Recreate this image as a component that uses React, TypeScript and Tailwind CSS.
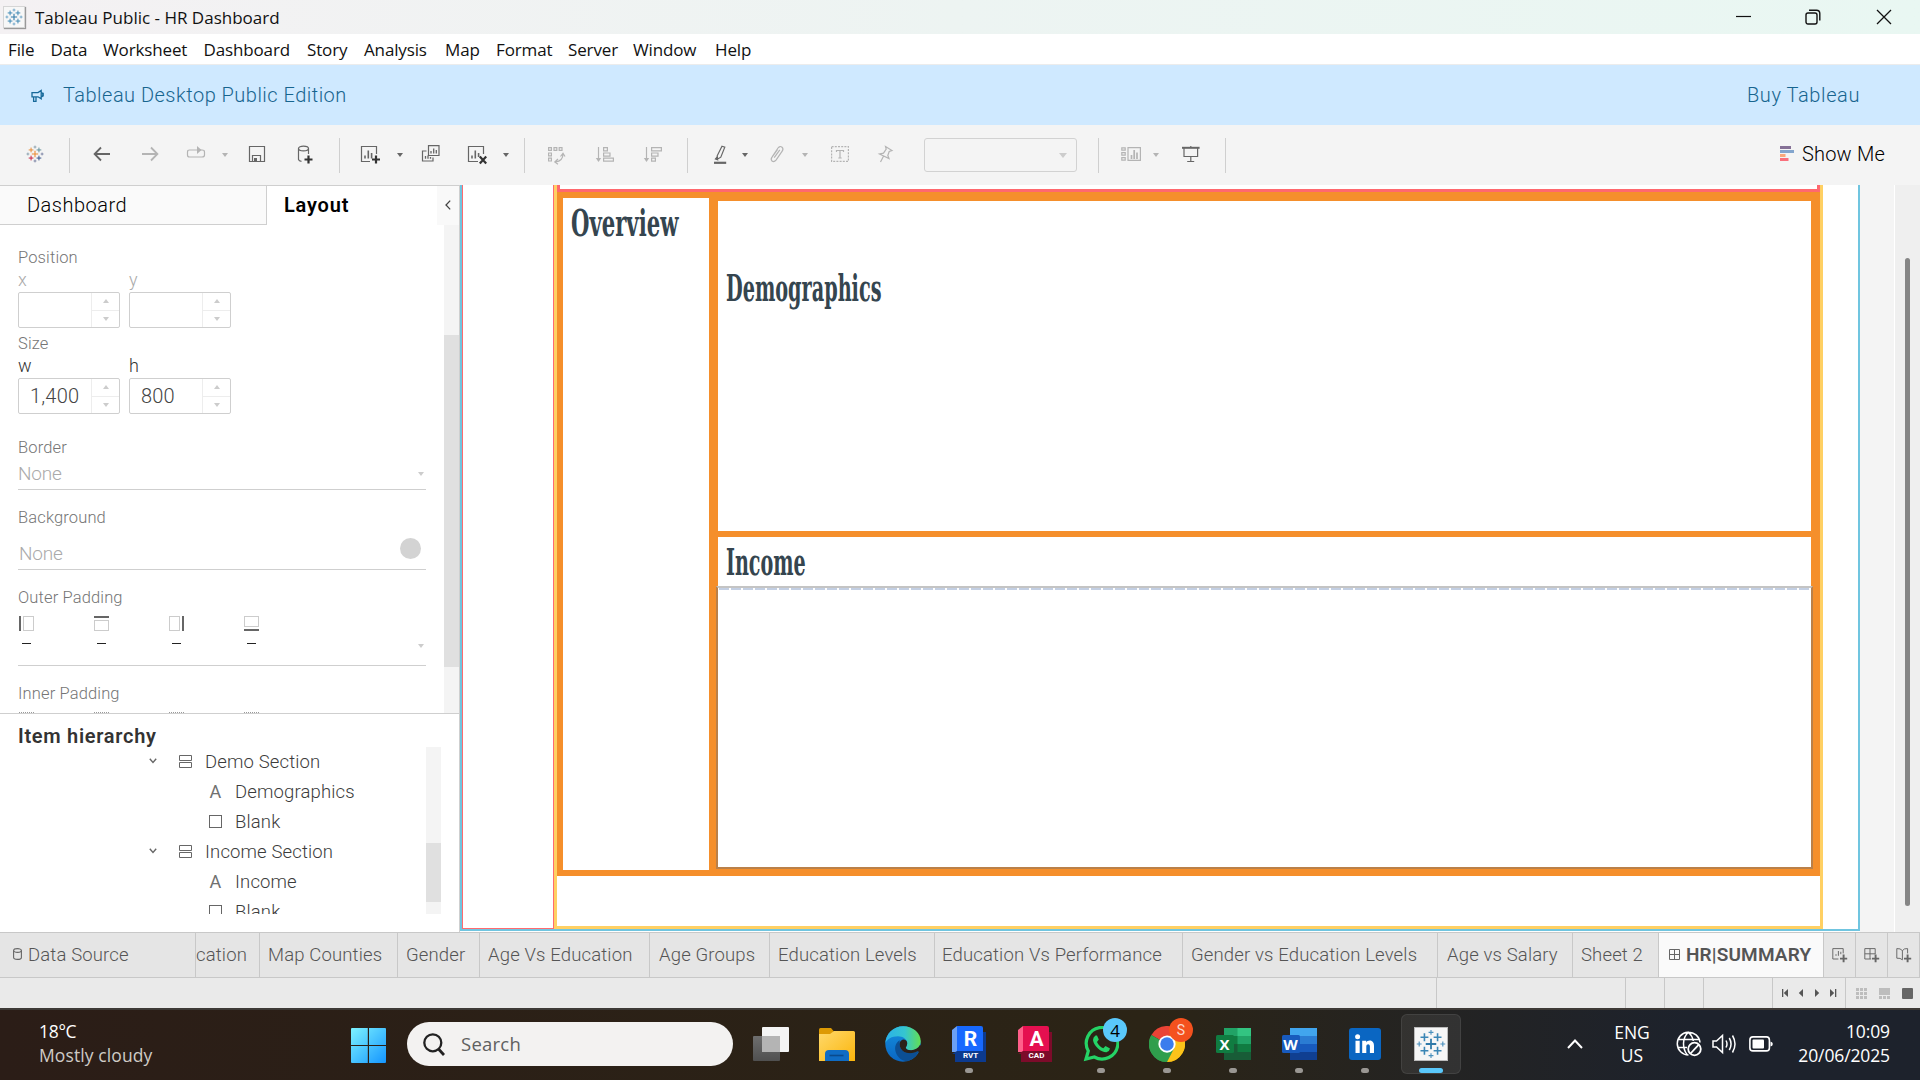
import React from "react";

/* ---------- shared glyphs ---------- */

type Plus = { x: number; y: number; r: number; c: string; w: number };

const tableauPluses = (colors: string[]): Plus[] => [
  { x: 16, y: 16, r: 5.6, c: colors[0], w: 1.9 },
  { x: 9, y: 8.8, r: 4.2, c: colors[1], w: 1.7 },
  { x: 23, y: 8.8, r: 4.2, c: colors[2], w: 1.7 },
  { x: 9, y: 23.2, r: 4.2, c: colors[3], w: 1.7 },
  { x: 23, y: 23.2, r: 4.2, c: colors[4], w: 1.7 },
  { x: 16, y: 3.6, r: 2.6, c: colors[5], w: 1.2 },
  { x: 16, y: 28.4, r: 2.6, c: colors[6], w: 1.2 },
  { x: 3.4, y: 16, r: 2.6, c: colors[5], w: 1.2 },
  { x: 28.6, y: 16, r: 2.6, c: colors[6], w: 1.2 },
];

const BLUES = ["#2f79a8", "#3b86b5", "#3b86b5", "#3b86b5", "#3b86b5", "#4a90bd", "#4a90bd"];
const BRAND = ["#eb8a2f", "#e58a35", "#5f8f98", "#c5203e", "#2f4f86", "#6f8a9c", "#5b6591"];

function TableauMark({ className, colors = BLUES }: { className?: string; colors?: string[] }) {
  return (
    <svg viewBox="0 0 32 32" className={className} fill="none">
      {tableauPluses(colors).map((p, i) => (
        <path
          key={i}
          d={`M${p.x - p.r} ${p.y}H${p.x + p.r}M${p.x} ${p.y - p.r}V${p.y + p.r}`}
          stroke={p.c}
          strokeWidth={p.w}
        />
      ))}
    </svg>
  );
}

function Caret({ className = "text-[#666]" }: { className?: string }) {
  return (
    <svg viewBox="0 0 6 4" className={`h-1 w-1.5 shrink-0 ${className}`} fill="currentColor">
      <path d="M0 0H6L3 4Z" />
    </svg>
  );
}

function Tool({ className = "h-5 w-5", children }: { className?: string; children: React.ReactNode }) {
  return (
    <svg viewBox="0 0 20 20" className={`shrink-0 ${className}`} fill="none" stroke="currentColor" strokeWidth="1.2">
      {children}
    </svg>
  );
}

function Sep({ className = "" }: { className?: string }) {
  return <div className={`h-[35px] w-px shrink-0 bg-[#cfcfcf] ${className}`} />;
}

/* ---------- window chrome ---------- */

function TitleBar() {
  return (
    <div className="flex h-[34px] items-center bg-linear-to-r from-[#f4f1f3] via-[#edf4f2] to-[#e9f7f2] pl-[3px]">
      <div className="flex h-[22px] w-[22px] items-center justify-center border border-[#d5d5d5] bg-[#f7f7f7] shadow-[1px_1px_1px_#999]">
        <TableauMark className="h-[18px] w-[18px]" />
      </div>
      <span className="ml-[10px] font-['Open_Sans','Noto_Sans',sans-serif] text-[17px] leading-none font-normal text-[#111]">
        Tableau Public - HR Dashboard
      </span>
      <svg viewBox="0 0 15 16" className="ml-auto h-4 w-[15px]" stroke="#111" fill="none">
        <path d="M0 7.5H15" strokeWidth="1.2" />
      </svg>
      <svg viewBox="0 0 16 16" className="ml-[54px] h-4 w-4" stroke="#111" fill="none" strokeWidth="1.4">
        <rect x="1" y="4" width="11" height="11" rx="2" />
        <path d="M4 1.3H11.5A3.3 3.3 0 0 1 14.8 4.6V11.6" />
      </svg>
      <svg viewBox="0 0 16 16" className="mr-[28px] ml-[55px] h-4 w-4" stroke="#111" fill="none" strokeWidth="1.3">
        <path d="M1 1L15 15M15 1L1 15" />
      </svg>
    </div>
  );
}

const MENUS = ["File", "Data", "Worksheet", "Dashboard", "Story", "Analysis", "Map", "Format", "Server", "Window", "Help"];

function MenuBar() {
  return (
    <div className="grid h-[31px] grid-cols-[42.5px_52.5px_100.5px_103.5px_57px_81px_51px_72px_65px_82px_60px] items-center border-b border-[#ececec] bg-white pt-px pl-2 font-['Open_Sans','Noto_Sans',sans-serif] text-[17px] leading-none font-normal tracking-[-0.14px] text-[#111]">
      {MENUS.map((m) => (
        <span key={m}>{m}</span>
      ))}
    </div>
  );
}

function Banner() {
  return (
    <div className="flex h-[60px] items-center bg-[#cfe9ff] pr-[60px] pl-[31px] text-[20px] leading-none text-[#17658f]">
      <svg viewBox="0 0 14 14" className="mt-[2px] h-[14px] w-[14px]" fill="none" stroke="#17699a" strokeWidth="1.3">
        <path d="M1 3.6H7L10.2 1.4V9.8L7 7.8H1ZM2.6 7.8V12.4H5V7.8M12.2 3.8V7.4M10.2 3.6C12.4 3.6 12.4 7.8 10.2 7.8" />
      </svg>
      <span className="ml-[18px] tracking-[0.48px]">Tableau Desktop Public Edition</span>
      <span className="ml-auto tracking-[0.6px]">Buy Tableau</span>
    </div>
  );
}

function Toolbar() {
  const on = "h-5 w-5 text-[#666]";
  const off = "h-5 w-5 text-[#b4b4b4]";
  return (
    <div className="flex h-[60px] items-center bg-[#f4f4f4] pl-[25px]">
      <TableauMark className="-mt-[2px] h-[18px] w-5" colors={BRAND} />
      <Sep className="ml-6" />
      <Tool className={`ml-[22px] ${on}`}>
        <path d="M18 9H3M9 2.5L2.6 9L9 15.5" strokeWidth="1.8" />
      </Tool>
      <Tool className={`ml-7 ${off}`}>
        <path d="M2 9H17M11 2.5L17.4 9L11 15.5" strokeWidth="1.8" />
      </Tool>
      <Tool className={`ml-[26px] ${off}`}>
        <path d="M7 5H3.5Q1.5 5 1.5 7V10Q1.5 12 3.5 12H16Q18.5 12 18.5 10V7Q18.5 5 16 5H3.5" />
        <path d="M11 1L15.5 5L11 9Z" fill="currentColor" stroke="none" />
      </Tool>
      <Caret className="ml-4 text-[#b4b4b4]" />
      <Tool className={`ml-[19px] ${on}`}>
        <path d="M2.5 1.5H17.5V16.5H2.5ZM5.5 16.5V10.5H13.5V16.5" />
        <path d="M7 13H10V16.5H7Z" fill="currentColor" stroke="none" />
      </Tool>
      <Tool className={`ml-7 ${on}`}>
        <ellipse cx="8.5" cy="3.5" rx="5" ry="2.4" />
        <path d="M3.5 3.5V14.5Q4 16 6.5 16.3M13.5 3.5V9" />
        <path d="M13.5 10.5V18.5M9.5 14.5H17.5" stroke="#333" strokeWidth="2.2" />
      </Tool>
      <Sep className="ml-6" />
      <Tool className={`ml-5 ${on}`}>
        <path d="M16.5 9V1.5H1.5V16.5H10" />
        <path d="M5 13.5V10.5M8.3 13.5V5.5M11.6 13.5V8" strokeWidth="1.6" />
        <path d="M16 10.5V18.5M12 14.5H20" stroke="#333" strokeWidth="2.2" />
      </Tool>
      <Caret className="ml-[17px] text-[#666]" />
      <Tool className={`ml-[18px] ${on}`}>
        <path d="M7.5 .7H18V10.5H7.5ZM5.5 6H1.5V16H12V12.5" />
        <path d="M10 8.5V6M12.7 8.5V3.5M15.3 8.5V5M4.5 13.8V11M7 13.8V10.5M9.5 13.8V12" strokeWidth="1.3" />
      </Tool>
      <Tool className={`ml-[26px] ${on}`}>
        <path d="M16.5 9V1.5H1.5V16.5H11" />
        <path d="M5 13.5V10.5M8.3 13.5V5.5M11.6 12V8" strokeWidth="1.6" />
        <path d="M12.8 11.5L19.2 18.5M19.2 11.5L12.8 18.5" stroke="#333" strokeWidth="2.2" />
      </Tool>
      <Caret className="ml-4 text-[#666]" />
      <Sep className="ml-[15px]" />
      <Tool className={`ml-[21px] ${off}`}>
        <path d="M2.6 2.6H5.4V5.4H2.6ZM8 2.6H10.8V5.4H8ZM13.2 2.6H16V5.4H13.2ZM2.6 8H5.4V10.8H2.6ZM2.6 13.2H5.4V16H2.6Z" />
        <path d="M17 9Q17 16 9.5 17M14.5 11.5L17 8.3L19 11.5M12 14L8.8 17L12 19.3" />
      </Tool>
      <Tool className={`ml-[29px] ${off}`}>
        <path d="M3.5 2V15" />
        <path d="M.8 13H6.2L3.5 17Z" fill="currentColor" stroke="none" />
        <path d="M8.6 2.6H12.4V5.8H8.6ZM8.6 8H15V11.2H8.6ZM8.6 13.2H18.4V16.2H8.6Z" />
      </Tool>
      <Tool className={`ml-7 ${off}`}>
        <path d="M3.5 2V15" />
        <path d="M.8 13H6.2L3.5 17Z" fill="currentColor" stroke="none" />
        <path d="M8.6 2.6H18.4V5.8H8.6ZM8.6 8H15V11.2H8.6ZM8.6 13.2H12.4V16.2H8.6Z" />
      </Tool>
      <Sep className="ml-6" />
      <Tool className={`ml-[22px] ${on}`}>
        <path d="M12 1.2L14.8 2.2L10.8 12.2L7.6 14L7.2 10.8Z" />
        <path d="M5.5 14L6.8 12.5L7.5 14.8Z" fill="currentColor" />
        <path d="M4 17.8H16.2" strokeWidth="2.2" />
      </Tool>
      <Caret className="ml-3 text-[#666]" />
      <Tool className={`ml-[19px] ${off}`}>
        <path d="M5 12L11 3Q13 .5 15 2.2Q16.8 4 15.2 6.2L9 15.2Q7 17.5 5 16Q3.4 14.5 5 12.2L10.6 4.5M7.2 12.6L12.8 4.8" />
      </Tool>
      <Caret className="ml-[15px] text-[#b4b4b4]" />
      <Tool className={`ml-[22px] ${off}`}>
        <rect x="1.6" y="1.6" width="16.8" height="14.8" strokeDasharray="2 1.2" />
        <path d="M6.5 7V5.5H13.5V7M10 5.5V13M8.3 13H11.7" />
      </Tool>
      <Tool className={`ml-[26px] ${off}`}>
        <path d="M9.5 1.5L16 5.5L13.2 6.5L11.8 10.5L13 13.5L3.5 9L7.5 8.2L10.2 4.2ZM7.5 11.2L4.5 17" />
      </Tool>
      <div className="ml-7 flex h-[34px] w-[153px] items-center justify-end rounded-[3px] border border-[#d2d2d2] pr-[9px]">
        <svg viewBox="0 0 8 5" className="h-[5px] w-2" fill="#ccc">
          <path d="M0 0H8L4 5Z" />
        </svg>
      </div>
      <Sep className="ml-[21px]" />
      <Tool className={`ml-[22px] ${off}`}>
        <path d="M.8 2.8H4.2V5.2H.8ZM.8 7.6H4.2V10.2H.8ZM.8 12.6H4.2V15.2H.8ZM7 2.6H19.4V15.4H7Z" />
        <path d="M10.5 14V10M13.2 14V5M16 14V7.5" strokeWidth="1.7" />
      </Tool>
      <Caret className="ml-3 text-[#b4b4b4]" />
      <Tool className={`ml-[22px] ${on}`}>
        <path d="M1 2.8H18.6" strokeWidth="2" />
        <path d="M3 3V11.5H16.6V3M9.8 1V2M9.8 11.5V16M6.2 16.5H13.2" />
      </Tool>
      <Sep className="ml-6" />
      <svg viewBox="0 0 14 15" className="mb-[3px] ml-auto h-[15px] w-[14px]">
        <path d="M0 0H11V3H0Z" fill="#857096" />
        <path d="M0 4H14V7H0Z" fill="#83a5cd" />
        <path d="M0 8H5.5V11H0Z" fill="#f9a87c" />
        <path d="M0 12H8.5V15H0Z" fill="#f9707c" />
      </svg>
      <span className="mr-[35px] mb-[3px] ml-[8px] text-[20px] leading-none tracking-[0.2px] text-black">Show Me</span>
    </div>
  );
}

/* ---------- layout side panel ---------- */

function Spinner({ value }: { value?: string }) {
  return (
    <div className="flex h-9 w-[102px] rounded-[2px] border border-[#cfcfcf] bg-white">
      <span className="flex flex-1 items-center pl-[11px] text-[20px] leading-none tracking-[0.2px] text-[#444]">{value}</span>
      <div className="flex w-[28px] flex-col border-l border-[#ededed]">
        <div className="flex flex-1 items-center justify-center border-b border-[#ededed]">
          <svg viewBox="0 0 6 4" className="h-1 w-1.5" fill="#ccc">
            <path d="M0 4H6L3 0Z" />
          </svg>
        </div>
        <div className="flex flex-1 items-center justify-center">
          <Caret className="text-[#ccc]" />
        </div>
      </div>
    </div>
  );
}

function PadIcon({ side }: { side: "left" | "top" | "right" | "bottom" }) {
  const bar = { left: "M1 0V15", top: "M0 1H15", right: "M14 0V15", bottom: "M0 14H15" }[side];
  const box = {
    left: "M4.5 .5H14.5V14.5H4.5Z",
    top: "M.5 4.5H14.5V14.5H.5Z",
    right: "M.5 .5H10.5V14.5H.5Z",
    bottom: "M.5 .5H14.5V10.5H.5Z",
  }[side];
  return (
    <div className="flex w-[75px] flex-col">
      <svg viewBox="0 0 15 15" className="h-[15px] w-[15px]" fill="none">
        <path d={box} stroke="#999" strokeDasharray="1 1" />
        <path d={bar} stroke="#666" strokeWidth="2" />
      </svg>
      <div className="mt-3 ml-[3px] h-px w-[9px] bg-[#222]" />
    </div>
  );
}

const label = "flex shrink-0 items-center text-[16.5px] leading-none tracking-[0.14px] text-[#757575]";
const axis = "w-[111px] text-[18px] leading-none";

function LayoutOptions() {
  return (
    <div className="flex h-[488px] overflow-hidden">
      <div className="flex w-[444px] flex-col pl-[18px]">
        <div className={`${label} mt-[23px] h-5`}>Position</div>
        <div className="flex h-6 shrink-0 items-center text-[#aaa]">
          <span className={axis}>x</span>
          <span className={axis}>y</span>
        </div>
        <div className="flex shrink-0 gap-[9px]">
          <Spinner />
          <Spinner />
        </div>
        <div className={`${label} mt-[6px] h-5`}>Size</div>
        <div className="flex h-6 shrink-0 items-center text-[#333]">
          <span className={axis}>w</span>
          <span className={axis}>h</span>
        </div>
        <div className="flex shrink-0 gap-[9px]">
          <Spinner value="1,400" />
          <Spinner value="800" />
        </div>
        <div className={`${label} mt-6 h-5`}>Border</div>
        <div className="flex h-8 w-[408px] shrink-0 items-center justify-between border-b border-[#cfcfcf] pr-[2px] text-[19px] leading-none tracking-[-0.2px] text-[#aaa]">
          None
          <Caret className="text-[#ccc]" />
        </div>
        <div className={`${label} mt-[18px] h-5`}>Background</div>
        <div className="flex h-[42px] w-[408px] shrink-0 justify-between border-b border-[#cfcfcf] pr-[5px] pl-[1px] text-[19px] leading-none tracking-[-0.2px] text-[#aaa]">
          <span className="mt-[16px]">None</span>
          <div className="mt-[10px] h-[21px] w-[21px] rounded-full bg-[#d3d3d3]" />
        </div>
        <div className={`${label} mt-[18px] h-5`}>Outer Padding</div>
        <div className="flex h-[58px] w-[408px] shrink-0 border-b border-[#cfcfcf] pt-2 pr-[2px] pl-[1px]">
          <PadIcon side="left" />
          <PadIcon side="top" />
          <PadIcon side="right" />
          <PadIcon side="bottom" />
          <Caret className="mt-7 ml-auto text-[#ccc]" />
        </div>
        <div className={`${label} mt-[18px] h-5`}>Inner Padding</div>
        <div className="flex shrink-0 pt-2 pl-[1px]">
          {[0, 1, 2, 3].map((i) => (
            <div key={i} className="mr-[60px] h-[15px] w-[15px] border border-dotted border-[#999]" />
          ))}
        </div>
      </div>
      <div className="w-[15px] bg-[#f4f4f4] pt-[110px]">
        <div className="h-[332px] bg-[#e0e0e0]" />
      </div>
    </div>
  );
}

function SectionRow({ name }: { name: string }) {
  return (
    <div className="flex h-[30px] shrink-0 items-center pl-[149px]">
      <svg viewBox="0 0 8 6" className="-mt-[2px] h-1.5 w-2" fill="none" stroke="#666" strokeWidth="1.4">
        <path d="M.8 .8L4 4.4L7.2 .8" />
      </svg>
      <svg viewBox="0 0 13 13" className="-mt-px ml-[22px] h-[13px] w-[13px]" fill="none" stroke="#666">
        <path d="M.5 .5H12.5V5.5H.5ZM.5 7.5H12.5V12.5H.5Z" />
      </svg>
      <span className="mt-px ml-[13px]">{name}</span>
    </div>
  );
}

function ItemRow({ name, text }: { name: string; text?: boolean }) {
  return (
    <div className="flex h-[30px] shrink-0 items-center pl-[209px]">
      {text ? (
        <span className="w-[13px] text-center text-[18px] font-normal text-[#707070]">A</span>
      ) : (
        <div className="-mt-[2px] h-[13px] w-[13px] border border-[#666]" />
      )}
      <span className="mt-px ml-[13px]">{name}</span>
    </div>
  );
}

function Hierarchy() {
  return (
    <div className="flex flex-1 flex-col border-t border-[#cfcfcf]">
      <div className="flex h-[33px] items-end pl-[18px] text-[20px] leading-none font-semibold tracking-[0.7px] text-[#333]">
        <span className="mb-px">Item hierarchy</span>
      </div>
      <div className="flex h-[167px] overflow-hidden text-[18.5px] leading-none tracking-[0.14px] text-[#3c3c3c]">
        <div className="flex w-[426px] flex-col">
          <SectionRow name="Demo Section" />
          <ItemRow name="Demographics" text />
          <ItemRow name="Blank" />
          <SectionRow name="Income Section" />
          <ItemRow name="Income" text />
          <ItemRow name="Blank" />
        </div>
        <div className="w-[15px] bg-[#f4f4f4] pt-24">
          <div className="h-[59px] bg-[#e0e0e0]" />
        </div>
      </div>
    </div>
  );
}

function SidePanel() {
  return (
    <div className="flex w-[460px] shrink-0 flex-col border-t border-r border-[#cfcfcf] bg-white">
      <div className="flex h-[39px] text-[20px] leading-none text-black">
        <div className="flex w-[267px] items-center border-r border-b border-[#cfcfcf] bg-[#fafafa] pl-[27px] tracking-[0.5px]">
          Dashboard
        </div>
        <div className="flex flex-1 items-center pb-[2px] pl-[17px] font-semibold tracking-[0.8px]">Layout</div>
        <div className="flex w-[22px] items-center justify-center bg-[#f9f9f9] pb-[2px]">
          <svg viewBox="0 0 6 10" className="h-[10px] w-1.5" fill="none" stroke="#444" strokeWidth="1.3">
            <path d="M5.2 .6L1 5L5.2 9.4" />
          </svg>
        </div>
      </div>
      <LayoutOptions />
      <Hierarchy />
    </div>
  );
}

/* ---------- dashboard canvas ---------- */

const slab =
  "inline-block origin-left font-['DejaVu_Serif_Condensed','DejaVu_Serif',serif] text-[37px] leading-none font-bold text-[#35454f] [font-stretch:condensed]";

function Canvas() {
  return (
    <div className="flex h-[746px] w-[1400px] shrink-0 border-x-2 border-b-2 border-[#70c5e0] bg-white">
      <div className="w-[92px] border-x border-b border-[#ff6b70]" />
      <div className="flex w-[1269px] flex-col border-x-[3px] border-b-[3px] border-[#ffd063]">
        <div className="h-[7px] border-x-[3px] border-b-[3px] border-[#ff686e]" />
        <div className="flex h-[684px] bg-[#f58f2b] pl-1.5">
          <div className="mt-1.5 h-[672px] w-[146px] bg-white pt-[7px] pl-2">
            <h2 className={`${slab} scale-x-[0.636]`}>Overview</h2>
          </div>
          <div className="mt-[9px] ml-[9px] flex w-[1093px] flex-col">
            <div className="h-[330px] bg-white pt-[69px] pl-[8px]">
              <h2 className={`${slab} scale-x-[0.578]`}>Demographics</h2>
            </div>
            <div className="mt-1.5 h-[49px] bg-white pt-[7px] pl-2">
              <h2 className={`${slab} scale-x-[0.575]`}>Income</h2>
            </div>
            <div className="-mx-0.5 h-[283px] border-2 border-t-[#c4c4c4] border-r-[#ba8049] border-b-[#ba8049] border-l-[#ba8049] bg-white">
              <div className="ml-px h-0.5 bg-[repeating-linear-gradient(to_right,#c3cfe3_0_10px,white_10px_12px)]" />
            </div>
          </div>
        </div>
      </div>
    </div>
  );
}

/* ---------- sheet tabs and status bar ---------- */

const tab = "flex shrink-0 items-center border-r border-[#c8c8c8]";

function SheetTabs() {
  return (
    <div className="flex h-[46px] overflow-hidden border-y border-[#c8c8c8] bg-[#e5e5e5] text-[18.5px] leading-none tracking-[0.15px] whitespace-nowrap text-[#555]">
      <div className={`${tab} w-[196px] pt-px pl-[13px]`}>
        <svg viewBox="0 0 9 12" className="-mt-[4px] mr-[6px] h-3 w-[9px]" fill="none" stroke="#666" strokeWidth="1.1">
          <path d="M.6 2.5V9.5Q.6 11.4 4.5 11.4Q8.4 11.4 8.4 9.5V2.5" />
          <ellipse cx="4.500" cy="2.500" rx="3.900" ry="1.900" />
        </svg>
        Data Source
      </div>
      <div className={`${tab} w-16 pt-px`}>cation</div>
      <div className={`${tab} w-[138px] pt-px pl-2`}>Map Counties</div>
      <div className={`${tab} w-[82px] pt-px pl-2`}>Gender</div>
      <div className={`${tab} w-[170px] pt-px pl-2`}>Age Vs Education</div>
      <div className={`${tab} w-[120px] pt-px pl-[9px]`}>Age Groups</div>
      <div className={`${tab} w-[165px] pt-px pl-2`}>Education Levels</div>
      <div className={`${tab} w-[248px] pt-px pl-[7px]`}>Education Vs Performance</div>
      <div className={`${tab} w-[255px] pt-px pl-2`}>Gender vs Education Levels</div>
      <div className={`${tab} w-[135px] pt-px pl-[9px]`}>Age vs Salary</div>
      <div className={`${tab} w-[86px] pt-px pl-2`}>Sheet 2</div>
      <div className="flex w-[165px] shrink-0 items-center border-r border-[#c8c8c8] bg-[#fafafa] pb-[2px] pl-[10px] text-[19px] font-semibold text-[#555]">
        <svg viewBox="0 0 11 11" className="mr-[6px] h-[11px] w-[11px]" fill="none" stroke="#666">
          <path d="M.5 .5H10.5V10.5H.5ZM5.500 .5V10.5M.5 5.500H10.5" />
        </svg>
        HR|SUMMARY
      </div>
      <div className={`${tab} w-8 justify-center pl-px`}>
        <Tool className="h-4 w-4 text-[#666]">
          <path d="M14 8V2H1V15H8" />
          <path d="M5 11V9M8 11V5M11 9V6" />
          <path d="M14.5 9.5V19M10 14.5H19" strokeWidth="2.4" />
        </Tool>
      </div>
      <div className={`${tab} w-8 justify-center pl-px`}>
        <Tool className="h-4 w-4 text-[#666]">
          <path d="M14 9V2H1V15H9M7.5 2V15M1 8.5H14" />
          <path d="M14.5 9.5V19M10 14.5H19" strokeWidth="2.4" />
        </Tool>
      </div>
      <div className={`${tab} w-8 justify-center pl-px`}>
        <Tool className="h-4 w-4 text-[#666]">
          <path d="M14.5 8V2Q10 1.5 8 4.5Q5.5 1.5 1 2V14Q5.5 13.5 8 16V4.5" />
          <path d="M14.5 9.5V19M10 14.5H19" strokeWidth="2.4" />
        </Tool>
      </div>
    </div>
  );
}

function StatusBar() {
  const cell = "shrink-0 border-l border-[#c8c8c8]";
  return (
    <div className="flex h-[30px] bg-[#eaeaea]">
      <div className="flex-1" />
      <div className={`${cell} w-[189px]`} />
      <div className={`${cell} w-[39px]`} />
      <div className={`${cell} w-[39px]`} />
      <div className={`${cell} w-[69px]`} />
      <div className={`${cell} flex w-[73px] items-center pl-[9px]`}>
        <svg viewBox="0 0 56 8" className="h-2 w-14" fill="#555">
          <path d="M0 0H1.3V8H0ZM6 0V8L1.8 4ZM21 0V8L16.8 4ZM33 0V8L37.2 4ZM48 0V8L52.2 4ZM53 0H54.3V8H53Z" />
        </svg>
      </div>
      <div className={`${cell} flex w-[75px] items-center gap-3 pl-[10px]`}>
        <svg viewBox="0 0 11 11" className="h-[11px] w-[11px]" fill="#bdbdbd">
          <path d="M0 0H3V3H0ZM4 0H7V3H4ZM8 0H11V3H8ZM0 4H3V7H0ZM4 4H7V7H4ZM8 4H11V7H8ZM0 8H3V11H0ZM4 8H7V11H4ZM8 8H11V11H8Z" />
        </svg>
        <svg viewBox="0 0 11 11" className="h-[11px] w-[11px]" fill="#bdbdbd">
          <path d="M0 0H11V7H0ZM0 8H3V11H0ZM4 8H7V11H4ZM8 8H11V11H8Z" />
        </svg>
        <div className="h-[11px] w-[11px] rounded-[1px] bg-[#666]" />
      </div>
    </div>
  );
}

/* ---------- taskbar ---------- */

function Slot({ children, running, active }: { children: React.ReactNode; running?: boolean; active?: boolean }) {
  return (
    <div className="flex h-full w-[66px] shrink-0 items-center justify-center">
      <div
        className={
          active
            ? "relative flex h-[60px] w-[60px] items-center justify-center rounded-md border border-white/8 bg-white/7"
            : "relative flex h-[60px] w-[60px] items-center justify-center"
        }
      >
        {children}
        {running && <div className="absolute bottom-px h-[5px] w-2 rounded-full bg-[#9a9793]" />}
        {active && <div className="absolute bottom-0 h-[5px] w-6 rounded-full bg-[#5ac8fb]" />}
      </div>
    </div>
  );
}

function AutodeskTile({ letter, code, variant }: { letter: string; code: string; variant: "blue" | "red" }) {
  const blue = variant === "blue";
  return (
    <div className="relative h-9 w-[34px]">
      <svg viewBox="0 0 34 36" className="h-9 w-[34px]">
        <path d="M28 6H34V36H28Z" fill={blue ? "#0c3a8e" : "#7c0b2a"} />
        <path d="M5 0H29Q31 0 31 2V26H5Z" fill={blue ? "#1769ff" : "#e51050"} />
        <path d="M0 4L5 0V26H0Z" fill={blue ? "#6ba0f5" : "#ff5f8a"} />
        <path d="M0 28L5 25H32V36H3V28Z" fill={blue ? "#0c3a8e" : "#7c0b2a"} />
      </svg>
      <div className="absolute inset-0 flex flex-col items-center pl-[3px] font-['Roboto',sans-serif] font-bold text-white">
        <span className="mt-[3px] text-[21px] leading-[21px]">{letter}</span>
        <span className="mt-[2px] text-[8px] leading-[8px]">{code}</span>
      </div>
    </div>
  );
}

function OfficeTile({ letter, c }: { letter: string; c: string[] }) {
  return (
    <div className="relative h-8 w-[35px]">
      <svg viewBox="0 0 35 32" className="h-8 w-[35px]">
        <path d="M8 0H35V8H8Z" fill={c[0]} />
        <path d="M8 8H35V16H8Z" fill={c[1]} />
        <path d="M8 16H35V24H8Z" fill={c[2]} />
        <path d="M8 24H35V32H8Z" fill={c[3]} />
        <path d="M21.5 0H35V8H21.5Z" fill={c[4]} />
        <path d="M21.5 8H35V16H21.5Z" fill={c[5]} />
        <path d="M21.5 16H35V24H21.5Z" fill={c[7]} />
        <rect x="0" y="7" width="18" height="18" rx="1.5" fill={c[6]} />
      </svg>
      <span className="absolute top-[7px] left-0 w-[18px] text-center font-['Open_Sans',sans-serif] text-[15px] leading-[18px] font-bold text-white">
        {letter}
      </span>
    </div>
  );
}

function TaskIcons() {
  return (
    <>
      <Slot>
        <svg viewBox="0 0 36 34" className="h-[34px] w-9">
          <defs>
            <linearGradient id="tv" x1="0" y1="0" x2="0" y2="1">
              <stop offset="0" stopColor="#6e6e6e" />
              <stop offset="1" stopColor="#505050" />
            </linearGradient>
          </defs>
          <rect x="9" y="0" width="27" height="25" rx="1" fill="#f4f4f4" />
          <rect x="0" y="9" width="27" height="25" rx="1" fill="url(#tv)" />
          <rect x="9" y="9" width="18" height="16" fill="#b4b4b4" />
        </svg>
      </Slot>
      <Slot>
        <svg viewBox="0 0 36 33" className="h-[33px] w-9">
          <defs>
            <linearGradient id="fo" x1="0" y1="0" x2="1" y2="1">
              <stop offset="0" stopColor="#ffd96b" />
              <stop offset="1" stopColor="#fbb50c" />
            </linearGradient>
          </defs>
          <path d="M0 1.5Q0 0 1.5 0H12L15 3.5L12 7H0Z" fill="#dd9a04" />
          <path d="M0 6H11L15 3H34.5Q36 3 36 4.5V33H0Z" fill="url(#fo)" />
          <path d="M6 33V26Q6 22 10 22H26Q30 22 30 26V33Z" fill="#0f6cc4" />
          <path d="M10.5 27.5H24.5" stroke="#0a4a8c" strokeWidth="1.6" />
        </svg>
      </Slot>
      <Slot>
        <svg viewBox="0 0 256 256" className="h-9 w-9">
          <defs>
            <linearGradient id="ea" x1="0" y1="0" x2="1" y2="0">
              <stop offset="0" stopColor="#2bb1e8" />
              <stop offset=".55" stopColor="#35c5d0" />
              <stop offset="1" stopColor="#63df52" />
            </linearGradient>
            <linearGradient id="eb" x1="0" y1="0" x2="0" y2="1">
              <stop offset="0" stopColor="#1590df" />
              <stop offset="1" stopColor="#0a66c2" />
            </linearGradient>
          </defs>
          <circle cx="128" cy="128" r="126" fill="url(#eb)" />
          <path d="M2 122C8 50 62 2 130 2C202 2 254 52 254 108C254 148 222 172 186 172C160 172 148 162 148 154C148 148 158 142 158 122C158 92 126 72 92 72C48 72 14 92 2 122Z" fill="url(#ea)" />
          <path d="M104 102C76 120 66 150 76 184C88 222 122 250 160 250C196 240 222 216 236 188C240 180 234 178 228 182C176 208 104 190 104 128Z" fill="#0c4f94" />
          <path d="M158 122C158 142 148 148 148 154C148 162 160 172 186 172C212 172 236 160 250 134L256 140V176L238 184C238 180 234 179 228 182C176 208 104 190 104 128C104 108 120 96 134 96C150 98 158 108 158 122Z" fill="#2c2119" />
        </svg>
      </Slot>
      <Slot running>
        <AutodeskTile letter="R" code="RVT" variant="blue" />
      </Slot>
      <Slot>
        <AutodeskTile letter="A" code="CAD" variant="red" />
      </Slot>
      <Slot running>
        <svg viewBox="0 0 36 36" className="h-9 w-9">
          <path d="M3 33L5.3 25A15.8 15.8 0 1 1 11.3 31Z" fill="none" stroke="#25d366" strokeWidth="3.2" />
          <path d="M12.5 9.5Q10 11 10 14Q10.5 18.5 15 22.5Q19.5 26.5 23.5 26.3Q26.5 25.5 27 22.5L22.5 20L20.3 22.2Q16 20.5 14 16L15.8 13.5L14 9.5Z" fill="#25d366" />
        </svg>
        <span className="absolute top-1 right-1 flex h-6 w-6 items-center justify-center rounded-full bg-[#5ac8fb] font-['Open_Sans',sans-serif] text-[17px] leading-none text-black">
          4
        </span>
      </Slot>
      <Slot running>
        <svg viewBox="0 0 48 48" className="h-9 w-9">
          <path d="M24 24L3.2 12A24 24 0 0 1 44.8 12Z" fill="#ea4335" />
          <path d="M24 24L44.8 12A24 24 0 0 1 24 48Z" fill="#fbbc05" />
          <path d="M24 24L24 48A24 24 0 0 1 3.2 12Z" fill="#34a04f" />
          <path d="M24 13H45.3A24 24 0 0 1 24 48L33.5 29.5Z" fill="#fcc31a" />
          <path d="M14.5 29.5L3.2 12A24 24 0 0 0 24 48L33.5 29.5Z" fill="#2f9e4c" />
          <circle cx="24" cy="24" r="11.5" fill="#fff" />
          <circle cx="24" cy="24" r="9" fill="#3b7ded" />
        </svg>
        <span className="absolute top-1 right-1 flex h-6 w-6 items-center justify-center rounded-full bg-[#f4511e] font-['Roboto',sans-serif] text-[14px] leading-none text-[#fbd9cd]">
          S
        </span>
      </Slot>
      <Slot running>
        <OfficeTile letter="X" c={["#21a366", "#107c41", "#185c37", "#185c37", "#33c481", "#21a366", "#107c41", "#107c41"]} />
      </Slot>
      <Slot running>
        <OfficeTile letter="W" c={["#41a5ee", "#2b7cd3", "#185abd", "#103f91", "#41a5ee", "#2b7cd3", "#185abd", "#185abd"]} />
      </Slot>
      <Slot running>
        <svg viewBox="0 0 32 32" className="h-8 w-8">
          <rect width="32" height="32" rx="3" fill="#0a66c2" />
          <circle cx="8.6" cy="8.8" r="2.5" fill="#fff" />
          <path d="M6.5 12.8H10.7V25H6.5ZM13.2 12.8H17.2V14.5C18.5 11.8 25 11.3 25 17.8V25H20.9V18.6C20.9 15.3 17.3 15.6 17.3 18.6V25H13.2Z" fill="#fff" />
        </svg>
      </Slot>
      <Slot active>
        <div className="flex h-[34px] w-[34px] items-center justify-center border border-[#bbb] bg-[#f6f6f6]">
          <TableauMark className="h-[30px] w-[30px]" />
        </div>
      </Slot>
    </>
  );
}

function Taskbar() {
  return (
    <div className="flex h-[72px] items-center border-t-2 border-[#3e3a37] bg-linear-to-r from-[#2b1d17] via-[#2b2416] via-60% to-[#1d222c] to-88% font-['Open_Sans','Noto_Sans',sans-serif] text-[17.5px] leading-6 font-normal text-white">
      <div className="w-[351px] pb-1 pl-[39px]">
        <div className="tracking-[-0.3px]">18°C</div>
        <div className="tracking-[0.1px] text-[#cfcbc6]">Mostly cloudy</div>
      </div>
      <svg viewBox="0 0 35 35" className="h-[35px] w-[35px]">
        <defs>
          <linearGradient id="win" x1="0" y1="0" x2="1" y2="1">
            <stop offset="0" stopColor="#7df3ff" />
            <stop offset="1" stopColor="#1495ff" />
          </linearGradient>
        </defs>
        <path d="M0 1Q0 0 1 0H16.8V17H0ZM18 0H34Q35 0 35 1V17H18ZM0 18H16.8V35H1Q0 35 0 34ZM18 18H35V34Q35 35 34 35H18Z" fill="url(#win)" />
      </svg>
      <div className="-mt-0.5 ml-[21px] flex h-11 w-[326px] items-center rounded-full bg-[#f3f2f1] pl-4 text-[18.5px] leading-none text-[#606060]">
        <svg viewBox="0 0 22 23" className="h-[23px] w-[22px]" fill="none" stroke="#222">
          <circle cx="9.8" cy="9.8" r="8.5" strokeWidth="2.3" />
          <path d="M15.5 16L21 22" strokeWidth="2.8" />
        </svg>
        <span className="ml-[16px] tracking-[0.25px]">Search</span>
      </div>
      <div className="-mt-0.5 ml-[5px] flex h-full">
        <TaskIcons />
      </div>
      <svg viewBox="0 0 16 10" className="-mt-0.5 ml-[103px] h-[10px] w-4" fill="none" stroke="#fff" strokeWidth="2">
        <path d="M1 9L8 1.5L15 9" />
      </svg>
      <div className="ml-[25px] w-[48px] pb-0.5 text-center leading-[23px]">
        <div>ENG</div>
        <div>US</div>
      </div>
      <svg viewBox="0 0 26 26" className="-mt-0.5 ml-[20px] h-[26px] w-[26px]" fill="none" stroke="#fff" strokeWidth="1.5">
        <path d="M12.5 24A11.4 11.4 0 1 1 24 11.5M2 8.5H23M2 16.5H11M11 23.5Q7.5 19 7.5 12.5Q7.5 5.5 12.5 1.2Q16.5 5 17.3 10" />
        <circle cx="18.5" cy="18" r="6.3" strokeWidth="1.8" />
        <path d="M14.5 22.5L22.8 13.6" strokeWidth="1.8" />
      </svg>
      <svg viewBox="0 0 26 22" className="-mt-0.5 ml-[10px] h-[22px] w-[26px]" fill="none" stroke="#fff" strokeWidth="1.5">
        <path d="M1 8H4.5L10.5 2.5V19.5L4.5 14H1ZM14 7.5Q16 11 14 14.5M17.3 5Q20.8 11 17.3 17M20.5 2.5Q25.5 11 20.5 19.5" />
      </svg>
      <svg viewBox="0 0 24 16" className="-mt-0.5 ml-[11px] h-4 w-6">
        <rect x=".9" y=".9" width="19.5" height="14" rx="3" fill="none" stroke="#fff" strokeWidth="1.6" />
        <rect x="3.5" y="3.5" width="11.5" height="9" rx="1" fill="#fff" />
        <path d="M21.5 5.5Q23.8 6 23.8 8Q23.8 10 21.5 10.5Z" fill="#fff" />
      </svg>
      <div className="ml-auto pr-[30px] pb-1 text-right tracking-[-0.12px]">
        <div>10:09</div>
        <div>20/06/2025</div>
      </div>
    </div>
  );
}

export default function App() {
  return (
    <div className="flex h-[1080px] w-[1920px] flex-col overflow-hidden bg-white font-['Roboto',sans-serif] font-light">
      <TitleBar />
      <MenuBar />
      <Banner />
      <Toolbar />
      <div className="flex h-[747px]">
        <SidePanel />
        <Canvas />
        <div className="w-[34px] bg-[#f4f4f4]" />
        <div className="flex flex-1 border-l border-white bg-[#efefef] pt-[73px] pl-[10px]">
          <div className="h-[648px] w-[5px] rounded-full bg-[#858585]" />
        </div>
      </div>
      <SheetTabs />
      <StatusBar />
      <Taskbar />
    </div>
  );
}
